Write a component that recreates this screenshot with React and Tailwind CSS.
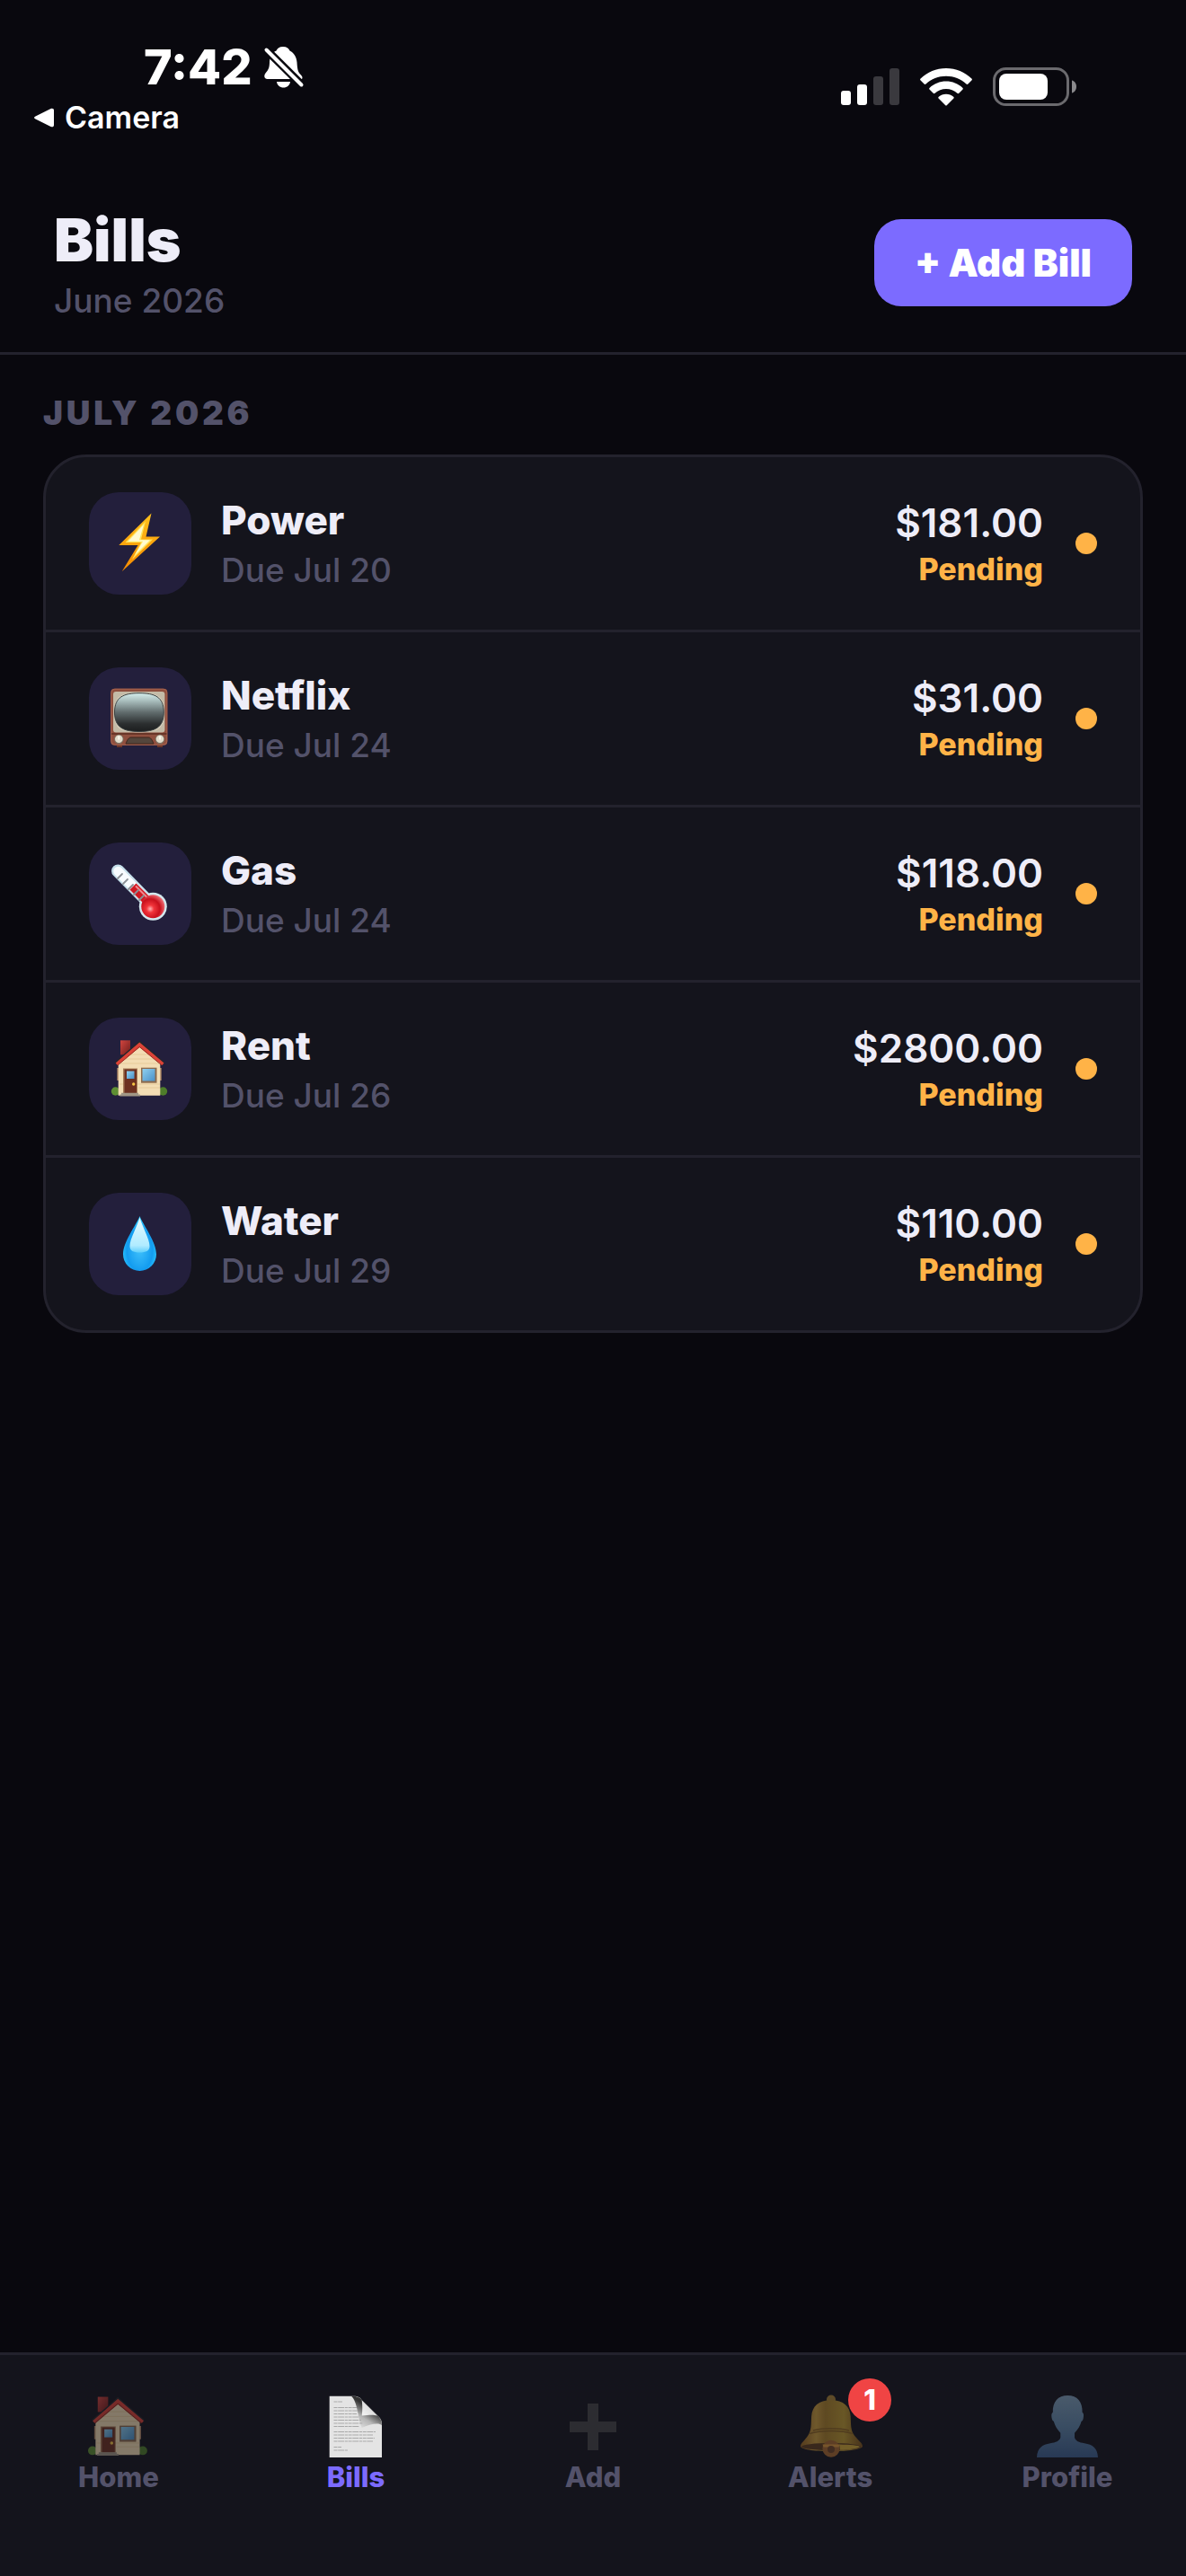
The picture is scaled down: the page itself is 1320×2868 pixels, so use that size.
import { useState } from 'react';

const BoltIcon = () => (
  <svg viewBox="0 0 72 72" className="size-[72px]" aria-hidden="true">
    <defs>
      <linearGradient id="boltEdge" x1="0" y1="0" x2="0" y2="1">
        <stop offset="0" stopColor="#ffc21c" />
        <stop offset="1" stopColor="#f78a00" />
      </linearGradient>
    </defs>
    <path d="M48.5 2.5 12.3 38h21.2L15.7 67.3 58 28.5H42.5z" fill="url(#boltEdge)" />
    <path d="M42 11.5 19.5 35H37l-10 19L50 31.5H37z" fill="#ffe45c" />
    <path d="M40 15 22.5 33.8H39L30 49 47 32.3H35z" fill="#fffbd0" />
  </svg>
);

const TvIcon = () => (
  <svg viewBox="0 0 72 72" className="size-[72px]" aria-hidden="true">
    <defs>
      <linearGradient id="tvScreen" x1="0" y1="0" x2="0" y2="1">
        <stop offset="0" stopColor="#d6efed" />
        <stop offset="0.2" stopColor="#a9bebd" />
        <stop offset="0.5" stopColor="#616c6d" />
        <stop offset="0.8" stopColor="#2b2e2f" />
        <stop offset="1" stopColor="#1c1e1f" />
      </linearGradient>
    </defs>
    <path d="M10 65h6v3h-6zM55 65h6v3h-6z" fill="#6b3527" />
    <rect x="3.3" y="2.7" width="63" height="63" rx="4" fill="#8f4f3e" />
    <rect x="3.8" y="3.2" width="62" height="62" rx="4" fill="none" stroke="#a8654f" />
    <rect x="6" y="6" width="57.4" height="45.5" rx="3" fill="#c4bba7" />
    <path d="M35 7.2c21 0 28 4 28 22s-7 22-28 22-28-4-28-22 7-22 28-22z" fill="#d9d1be" />
    <path d="M35 7.7c17 0 27.300 4 27.300 21.300S52 50.500 35 50.500 7.500 46.300 7.500 29 18 7.700 35 7.700z" fill="url(#tvScreen)" stroke="#3b4141" />
    <path d="M4 53h61.500" stroke="#5c2e22" strokeWidth="1.500" />
    <path d="M20 64c2-5 3.500-7 6-7h19c2.500 0 4 2 6 7z" fill="#54463c" stroke="#3c241c" />
    <circle cx="12.3" cy="59" r="5.200" fill="#7d7465" />
    <circle cx="58" cy="59" r="5.200" fill="#7d7465" />
    <circle cx="12.3" cy="58.800" r="4.300" fill="#e3dccb" />
    <circle cx="58" cy="58.800" r="4.300" fill="#e3dccb" />
    <path d="M12.300 55.500v4M58 55.500v4" stroke="#fffdf4" strokeWidth="1.500" />
  </svg>
);

const ThermometerIcon = () => (
  <svg viewBox="0 0 72 72" className="size-[72px]" aria-hidden="true">
    <defs>
      <radialGradient id="bulb" cx="0.38" cy="0.6" r="0.65">
        <stop offset="0" stopColor="#ffb3b3" />
        <stop offset="0.25" stopColor="#f2353b" />
        <stop offset="0.65" stopColor="#c8101c" />
        <stop offset="1" stopColor="#ef7078" />
      </radialGradient>
    </defs>
    <path d="M11.300 10.700 48 48" stroke="#c5dfea" strokeWidth="14.500" strokeLinecap="round" />
    <circle cx="50.300" cy="50.300" r="15.500" fill="#d3e8ee" />
    <path d="M11.500 11 46 46" stroke="#f7fbfe" strokeWidth="10.500" strokeLinecap="round" />
    <path d="M28 28 46 46" stroke="#cf1822" strokeWidth="10" />
    <path d="M31 27.500 47 43.500" stroke="#f0898d" strokeWidth="2" />
    <circle cx="50.300" cy="50.300" r="13" fill="url(#bulb)" />
    <path d="m11 19 5-5M17 25l5-5M23 31l5-5M29 37l5-5M35 43l5-5" stroke="#8b9095" strokeWidth="1.800" strokeLinecap="round" />
  </svg>
);

const HouseIcon = ({ className = 'size-[72px]' }) => (
  <svg viewBox="0 0 72 72" className={className} aria-hidden="true">
    <defs>
      <linearGradient id="chimney" x1="0" y1="0" x2="1" y2="1">
        <stop offset="0" stopColor="#d2453f" />
        <stop offset="1" stopColor="#6e1e1c" />
      </linearGradient>
      <linearGradient id="pane" x1="0" y1="0" x2="1" y2="1">
        <stop offset="0" stopColor="#8fd0f0" />
        <stop offset="1" stopColor="#4a90c8" />
      </linearGradient>
    </defs>
    <rect x="14" y="4.300" width="11" height="16" fill="url(#chimney)" />
    <circle cx="8.500" cy="61" r="4.700" fill="#5f8f33" />
    <circle cx="61.500" cy="61" r="4.700" fill="#4e7d2a" />
    <path d="M10.300 35h49.400v14H10.300z" fill="#a98362" />
    <path d="M11.700 28 35.300 9l23 19v37.700H11.700z" fill="#f3ddb4" />
    <path d="M25 20h21M19 25h33M13 30h44M13 53h45M34 57h24" stroke="#e2c896" strokeWidth="0.800" />
    <path d="M35.300 4.500 8 28.500l1 2.500L35.300 8.500 62 31l1-2.500z" fill="#25262a" />
    <path d="M35.300 6.500 8.700 29.500l2 2.500L35.300 12 60.500 32l2-2.500z" fill="#dc4337" />
    <path d="M35.300 11.500 11 32M35.300 11.500 60 32" stroke="#98281f" strokeWidth="1" />
    <rect x="17" y="35.500" width="16" height="27.500" fill="#a77c58" />
    <rect x="18.500" y="36.500" width="13.500" height="26.500" fill="#6d3020" />
    <rect x="21" y="38.500" width="8.500" height="8.500" fill="url(#pane)" />
    <circle cx="28.700" cy="53" r="1.700" fill="#f6c544" />
    <rect x="37" y="34.700" width="17.500" height="17" fill="#8c6b4e" />
    <rect x="38.500" y="36" width="14" height="13.500" fill="url(#pane)" />
    <path d="M15 62.800h19v1.600h2v2H13.300v-2H15z" fill="#a09685" />
  </svg>
);

const DropIcon = () => (
  <svg viewBox="0 0 72 72" className="size-[72px]" aria-hidden="true">
    <defs>
      <radialGradient id="drop" cx="0.5" cy="0.62" r="0.55">
        <stop offset="0" stopColor="#3fc0fb" />
        <stop offset="0.7" stopColor="#139cf0" />
        <stop offset="1" stopColor="#2cc8ff" />
      </radialGradient>
      <linearGradient id="dropShine" x1="0" y1="0" x2="0" y2="1">
        <stop offset="0" stopColor="#e8fcff" />
        <stop offset="0.8" stopColor="#b0ebff" />
        <stop offset="1" stopColor="#5fcffc" />
      </linearGradient>
    </defs>
    <path d="M35.500 5C31 16 17 33.500 17 47.500a18.500 18.500 0 0 0 37 0C54 33.500 40 16 35.500 5z" fill="url(#drop)" />
    <path d="M35.500 6.500C33 16 24.500 30 24.500 38.500c0 5 4 7 11 7s11-2 11-7C46.500 30 38 16 35.500 6.500z" fill="url(#dropShine)" />
  </svg>
);

const PageIcon = () => (
  <svg viewBox="0 0 76 76" className="size-[76px]" aria-hidden="true">
    <defs>
      <linearGradient id="curl" x1="0" y1="1" x2="1" y2="0">
        <stop offset="0" stopColor="#f4f4f4" />
        <stop offset="1" stopColor="#c9c9c9" />
      </linearGradient>
      <linearGradient id="curlShade" x1="0.2" y1="1" x2="0.75" y2="0.1">
        <stop offset="0" stopColor="#e3e3e3" />
        <stop offset="0.35" stopColor="#b5b5b5" />
        <stop offset="0.7" stopColor="#333333" />
      </linearGradient>
    </defs>
    <path d="M8.700 3.700H35c6 0 8 1.500 9.700 4.600L62 25.300c3 2.500 5 5 5 9.700v37H8.700z" fill="#e4e4e4" />
    <path d="M33 3.700c7 0 10 1.500 11.700 4.600L62 25.300c3 2.500 5 6 5 11-3-3-11-2-22.300 2.700C40 27 40 10 33 3.700z" fill="url(#curlShade)" />
    <path d="M44.700 8.300 62 25.500c-4-1.200-9-1-17.300 0 .8-6 .8-11 0-17.200z" fill="url(#curl)" />
    <path d="M13.500 10H23M13.500 16.500H39M13.500 20H40M13.500 23.500H39M13.500 27H41M13.500 30.500H44M13.500 34H46M13.500 37.500H42M13.500 43.500H60M13.500 47H57M13.500 50.500H59M13.500 54H57M13.500 60.500H22M13.500 64H29" stroke="#a9a9a9" strokeWidth="1.200" strokeDasharray="4 0.700 7 0.700 3 0.700" />
  </svg>
);

const PlusIcon = () => (
  <svg viewBox="0 0 76 76" className="size-[76px]" aria-hidden="true">
    <path d="M32 12h12v20h20v12H44v20H32V44H12V32h20z" fill="#444446" />
  </svg>
);

const BellIcon = () => (
  <svg viewBox="0 0 76 76" className="size-[76px]" aria-hidden="true">
    <defs>
      <linearGradient id="bellBody" x1="0" y1="0" x2="1" y2="0">
        <stop offset="0" stopColor="#94631f" />
        <stop offset="0.25" stopColor="#c99c3c" />
        <stop offset="0.4" stopColor="#a87f28" />
        <stop offset="0.7" stopColor="#bd9a30" />
        <stop offset="1" stopColor="#7a521a" />
      </linearGradient>
    </defs>
    <circle cx="39" cy="7.500" r="5" fill="#a88234" />
    <path d="M39 8.300c14 0 21 7 21.700 18 .5 9-.2 15 4 21C69 53 74 56 74 59.500c0 3.500-15 5.500-35 5.500S5 63 5 59.500C5 56 10 53 13.500 47.300c3.800-6 3.100-12 3.600-21C18 15 25 8.300 39 8.300z" fill="url(#bellBody)" />
    <path d="M15 45.500c12-4 36-4 48 0M19 42c11-3 29-3 40 0" fill="none" stroke="#8c6422" strokeWidth="1.500" />
    <ellipse cx="39" cy="60" rx="33" ry="4" fill="#5e3d1c" />
    <path d="M48 57.500c12 .3 22 1 23 2.500-2 2-12 3.500-22 3.800z" fill="#cfa735" />
    <circle cx="39" cy="62.300" r="9.500" fill="#a5682f" />
    <path d="M29.500 57.500h19l-1 3h-17z" fill="#d9963a" />
    <circle cx="39" cy="63" r="4" fill="#6f4526" />
  </svg>
);

const PersonIcon = () => (
  <svg viewBox="0 0 76 76" className="size-[76px]" aria-hidden="true">
    <defs>
      <linearGradient id="person" x1="0" y1="0" x2="0" y2="1">
        <stop offset="0" stopColor="#7f9fb9" />
        <stop offset="0.5" stopColor="#5f86a8" />
        <stop offset="1" stopColor="#3c5f8e" />
      </linearGradient>
    </defs>
    <path d="M38.300 3C49 3 55 10 54.600 22c1.800.5 1.700 4 1 7-.5 2-1.200 2.500-2 2.800-1.200 5-4 9-7.600 13v5c1 4 5 5.500 11 6.500 9 1.500 14.500 5 15 15.700H4c.5-10.700 6-14.200 15-15.700 6-1 10.300-2.500 11.300-6.500v-5c-3.500-4-6.300-8-7.500-13-.8-.3-1.500-.8-2-2.800-.7-3-.8-6.500 1-7C21.400 10 27.500 3 38.300 3z" fill="url(#person)" />
  </svg>
);

const SilentIcon = () => (
  <svg viewBox="0 0 46 48" className="h-12 w-[46px]" aria-hidden="true">
    <path d="M22 1c4 0 6.500 2 7.500 4.500 5 2.500 7.500 7 8 13 .5 8 1 10.500 4.500 14 1.500 1.500 2 3 1 4.500H4.500C1 37 .5 33 2.500 30.500 6 26.500 7 24 7 17.500 7.500 11 10 7.500 14.500 5.500 15.500 3 18 1 22 1z" fill="#fff" />
    <path d="M15 40h15c-.5 4-3.500 6.500-7.500 6.500S15.500 44 15 40z" fill="#fff" />
    <path d="M3.500 4.500 43 43.500" stroke="#09080e" strokeWidth="9" />
    <path d="M3.500 4.500 42.500 43.500" stroke="#fff" strokeWidth="4" strokeLinecap="round" />
  </svg>
);

const SignalIcon = () => (
  <svg viewBox="0 0 65 41" className="h-[41px] w-[65px]" role="img" aria-label="Signal">
    <rect x="0" y="25" width="11" height="16" rx="3" fill="#fff" />
    <rect x="18" y="18" width="11" height="23" rx="3" fill="#fff" />
    <rect x="36" y="9" width="11" height="32" rx="3" fill="#3a393e" />
    <rect x="54" y="0" width="11" height="41" rx="3" fill="#3a393e" />
  </svg>
);

const WifiIcon = () => (
  <svg viewBox="0 0 58 42" className="h-[42px] w-[58px]" role="img" aria-label="Wi-Fi">
    <path d="M29 0C18 0 8 4.300.600 11.500c-.700.700-.700 1.300 0 2l4 4c.600.600 1.200.600 1.900 0C12.500 12 20.500 8.800 29 8.800S45.500 12 51.500 17.500c.700.600 1.300.600 1.900 0l4-4c.700-.700.700-1.300 0-2C50 4.300 40 0 29 0z" fill="#fff" />
    <path d="M29 14.500c-7 0-13.500 2.700-18.300 7.200-.700.700-.700 1.300 0 2l4 4c.600.600 1.200.600 1.900 0 3.400-3 7.700-4.700 12.400-4.700s9 1.700 12.400 4.700c.700.600 1.300.600 1.900 0l4-4c.700-.700.700-1.300 0-2C42.500 17.200 36 14.500 29 14.500z" fill="#fff" />
    <path d="M29 28.800c-3.200 0-6 1.100-8.200 3-.700.600-.700 1.200 0 1.900l7.200 7.300c.700.700 1.300.700 2 0l7.200-7.300c.700-.700.700-1.300 0-1.900-2.200-1.900-5-3-8.200-3z" fill="#fff" />
  </svg>
);

const BatteryIcon = () => (
  <svg viewBox="0 0 93 43" className="h-[43px] w-[93px]" role="img" aria-label="Battery">
    <rect x="1.500" y="1.500" width="82" height="40" rx="13" fill="none" stroke="#6b6a6e" strokeWidth="3" />
    <rect x="7" y="7" width="54" height="29" rx="8" fill="#fff" />
    <path d="M88 14.500c3 .7 5 3.500 5 7s-2 6.300-5 7z" fill="#8a898c" />
  </svg>
);

const bills = [
  { id: 1, name: 'Power', due: 'Jul 20', amount: 181, status: 'Pending', icon: BoltIcon },
  { id: 2, name: 'Netflix', due: 'Jul 24', amount: 31, status: 'Pending', icon: TvIcon },
  { id: 3, name: 'Gas', due: 'Jul 24', amount: 118, status: 'Pending', icon: ThermometerIcon },
  { id: 4, name: 'Rent', due: 'Jul 26', amount: 2800, status: 'Pending', icon: HouseIcon },
  { id: 5, name: 'Water', due: 'Jul 29', amount: 110, status: 'Pending', icon: DropIcon }
];

const tabs = [
  { id: 'home', label: 'Home', icon: <HouseIcon className="size-[76px]" /> },
  { id: 'bills', label: 'Bills', icon: <PageIcon /> },
  { id: 'add', label: 'Add', icon: <PlusIcon /> },
  { id: 'alerts', label: 'Alerts', icon: <BellIcon />, badge: 1 },
  { id: 'profile', label: 'Profile', icon: <PersonIcon /> }
];

function StatusBar() {
  return (
    <div className="flex items-start justify-between text-white">
      <div className="pt-[43px] pl-9">
        <div className="flex items-center gap-3 pl-[124px]">
          <span className="text-[54px] leading-[64px] font-extrabold">7:42</span>
          <SilentIcon />
        </div>
        <a href="#camera" className="mt-1 flex items-center gap-3 text-[34px] leading-10 font-semibold">
          <svg viewBox="0 0 24 24" className="size-6" aria-hidden="true">
            <path d="M3.500 10.500 20.500 2c2-.9 3.500 0 3.500 2v16c0 2-1.500 2.900-3.500 2l-17-8.500c-2-1-2-2 0-3z" fill="#fff" />
          </svg>
          Camera
        </a>
      </div>
      <div className="flex items-center gap-[23px] pt-[75px] pr-[122px]">
        <SignalIcon />
        <WifiIcon />
        <BatteryIcon />
      </div>
    </div>
  );
}

function BillRow({ bill }) {
  const Icon = bill.icon;

  return (
    <li className="flex items-center border-b-[3px] border-[#23222d] px-12 py-[39px] last:border-b-0">
      <div className="flex size-[114px] shrink-0 items-center justify-center rounded-[33px] bg-[#231f3c]">
        <Icon />
      </div>
      <div className="ml-[33px] flex-1">
        <h3 className="text-[44px] leading-[52px] font-extrabold text-[#eeedf8]">{bill.name}</h3>
        <p className="mt-2 text-[37px] leading-[44px] font-medium text-[#53526a]">Due {bill.due}</p>
      </div>
      <div className="text-right">
        <p className="text-[44px] leading-[52px] font-semibold text-[#eeedf8]">${bill.amount.toFixed(2)}</p>
        <p className="mt-1.5 text-[34px] leading-10 font-extrabold text-[#ffb347]">{bill.status}</p>
      </div>
      <span className="ml-9 size-6 shrink-0 rounded-full bg-[#ffb347]" />
    </li>
  );
}

function TabBar({ active, onSelect }) {
  return (
    <nav className="flex border-t-[3px] border-[#23222d] bg-[#14141c] pt-[42px] pb-[92px]">
      {tabs.map((tab) => (
        <a
          key={tab.id}
          href={`#${tab.id}`}
          onClick={() => onSelect(tab.id)}
          className={`flex flex-1 flex-col items-center text-[31px] leading-9 font-extrabold ${
            active === tab.id ? 'text-[#7c6bff]' : 'text-[#53526a]'
          }`}
        >
          <span className="relative">
            <span className={active === tab.id ? 'block' : 'block opacity-50'}>{tab.icon}</span>
            {tab.badge && (
              <span className="absolute -top-4 -right-[30px] flex size-12 items-center justify-center rounded-full bg-[#f04444] text-[31px] font-extrabold text-white">
                {tab.badge}
              </span>
            )}
          </span>
          {tab.label}
        </a>
      ))}
    </nav>
  );
}

function App() {
  const [activeTab, setActiveTab] = useState('bills');

  return (
    <div className="flex min-h-screen flex-col bg-[#09080e] font-['Inter',sans-serif]">
      <StatusBar />

      <header className="flex items-center justify-between border-b-[3px] border-[#23222d] px-[60px] pt-[76px] pb-[35px]">
        <div>
          <h1 className="text-[66px] leading-[80px] font-black text-[#eeedf8]">Bills</h1>
          <p className="mt-1.5 text-[37px] leading-[44px] font-medium text-[#53526a]">June 2026</p>
        </div>
        <button className="rounded-[30px] bg-[#7c6bff] px-[45px] py-6 text-[42px] leading-[49px] font-black text-white">
          + Add Bill
        </button>
      </header>

      <main className="flex-1 px-12 pt-[43px]">
        <h2 className="text-[37px] leading-[44px] font-black tracking-widest text-[#53526a] uppercase">July 2026</h2>
        <ul className="mt-6 overflow-hidden rounded-[48px] border-[3px] border-[#23222d] bg-[#14141c]">
          {bills.map((bill) => (
            <BillRow key={bill.id} bill={bill} />
          ))}
        </ul>
      </main>

      <TabBar active={activeTab} onSelect={setActiveTab} />
    </div>
  );
}

export default App;
